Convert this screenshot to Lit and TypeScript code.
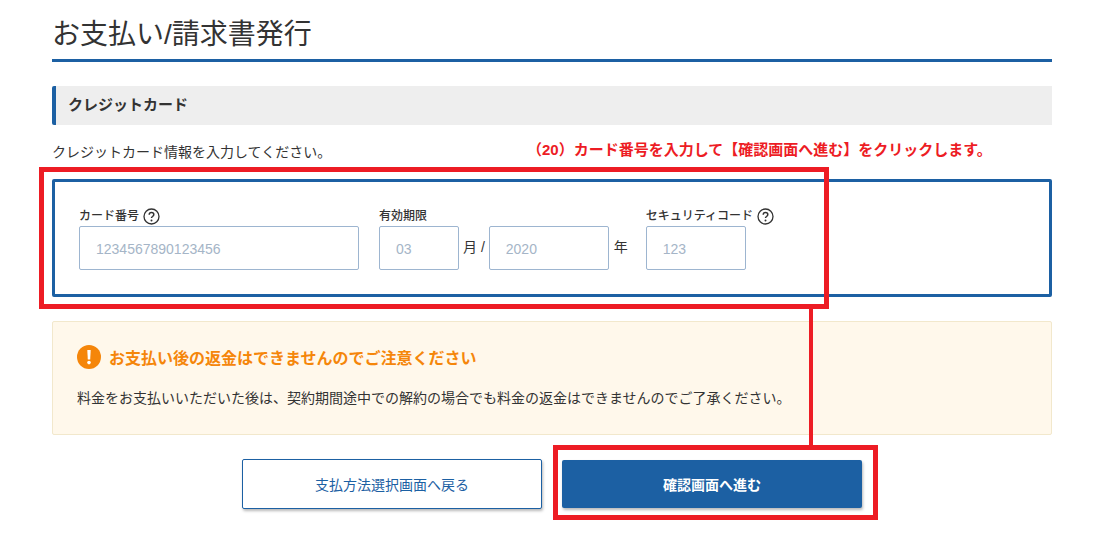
import { LitElement, html, css } from "lit";
import { customElement } from "lit/decorators.js";

const help = html`<svg class="help" width="17" height="17" viewBox="0 0 17 17" aria-hidden="true">
  <circle cx="8.5" cy="8.5" r="7.5" fill="none" stroke="#333" stroke-width="1.3"></circle>
  <path d="M6.2 6.7c0-1.4 1-2.2 2.3-2.2s2.3.8 2.3 2c0 1-.6 1.5-1.3 2-.6.4-1 .8-1 1.6" fill="none" stroke="#333" stroke-width="1.5"></path>
  <circle cx="8.5" cy="12.4" r="1" fill="#333"></circle>
</svg>`;

@customElement("app-root")
export class AppRoot extends LitElement {
  static styles = css`
    :host {
      display: block;
      position: relative;
      width: 1099px;
      height: 548px;
      overflow: hidden;
      background: #fff;
      color: #333;
      font-family: "Liberation Sans", "Noto Sans CJK JP", sans-serif;
      font-size: 14px;
    }
    .page {
      width: 1000px;
      margin-left: 52px;
      display: flex;
      flex-direction: column;
    }
    h1 {
      margin: 0;
      height: 59px;
      box-sizing: content-box;
      border-bottom: 3px solid #1c60a3;
      font-size: 28px;
      font-weight: 400;
      line-height: 70px;
    }
    h2 {
      margin: 24px 0 0;
      height: 39px;
      background: #eee;
      border-left: 4px solid #1c60a3;
      border-radius: 2px 0 0 2px;
      padding-left: 12px;
      font-size: 15px;
      font-weight: 700;
      line-height: 37px;
    }
    .lead {
      margin: 0;
      height: 54px;
      font-size: 14px;
      line-height: 54px;
    }
    .card {
      box-sizing: border-box;
      height: 118px;
      border: 3px solid #1c60a3;
      border-radius: 2px;
      padding: 25px 24px 0;
      display: flex;
      align-items: flex-start;
    }
    .field { display: flex; flex-direction: column; }
    .exp { margin-left: 20px; }
    .sec { margin-left: 18px; }
    label {
      height: 19px;
      margin-bottom: -1px;
      display: flex;
      align-items: center;
      gap: 4px;
      font-size: 12px;
      font-weight: 500;
      line-height: 19px;
    }
    .inputs { display: flex; align-items: center; height: 44px; margin-top: 1px; }
    input {
      box-sizing: border-box;
      height: 44px;
      border: 1px solid #9db5d0;
      border-radius: 2px;
      background: #fff;
      padding: 1px 16px 0;
      font: 14px "Liberation Sans", "Noto Sans CJK JP", sans-serif;
      outline: none;
    }
    input::placeholder { color: #a5b5c7; opacity: 1; }
    .w280 { width: 280px; }
    .w80 { width: 80px; }
    .w100 { width: 100px; }
    .w120 { width: 120px; }
    .unit { font-size: 14px; margin: -4px 4px 0; white-space: pre; }
    .unit.year { margin-left: 5px; margin-right: 0; }
    .notice {
      box-sizing: border-box;
      margin-top: 24px;
      height: 114px;
      background: #fff8eb;
      border: 1px solid #f2e8cc;
      border-radius: 2px;
      padding: 23px 24px 0;
    }
    .notice-title {
      display: flex;
      align-items: center;
      gap: 8px;
      height: 24px;
      color: #f5860a;
      font-size: 16px;
      font-weight: 700;
    }
    .notice-body { margin: 18px 0 0; font-size: 14px; line-height: 22px; white-space: nowrap; }
    .actions {
      margin-top: 24px;
      display: flex;
      justify-content: center;
      align-items: center;
      gap: 20px;
      width: 1000px;
      padding-left: 0;
    }
    .btn {
      box-sizing: border-box;
      width: 300px;
      display: flex;
      align-items: center;
      justify-content: center;
      border-radius: 2px;
      font: 14px "Liberation Sans", "Noto Sans CJK JP", sans-serif;
      box-shadow: 1px 2px 3px rgba(0, 0, 0, 0.28);
      padding: 0;
    }
    .ghost { height: 50px; background: #fff; color: #1c60a3; border: 1px solid #1c60a3; }
    .primary { height: 48px; background: #1c60a3; color: #fff; border: 0; font-weight: 700; }
    .note {
      position: absolute;
      left: 527px;
      top: 139px;
      color: #ed1c24;
      font-size: 15px;
      font-weight: 700;
      line-height: 22px;
      white-space: nowrap;
    }
    .mark { position: absolute; box-sizing: border-box; border: 5px solid #ed1c24; }
    .m1 { left: 39px; top: 167px; width: 790px; height: 142px; }
    .m2 { left: 553px; top: 445px; width: 325px; height: 75px; }
    .link { position: absolute; left: 809px; top: 309px; width: 4px; height: 136px; background: #ed1c24; }
  `;

  render() {
    return html`
      <div class="page">
        <h1>お支払い/請求書発行</h1>
        <h2>クレジットカード</h2>
        <p class="lead">クレジットカード情報を入力してください。</p>
        <div class="card">
          <div class="field">
            <label>カード番号 ${help}</label>
            <div class="inputs"><input class="w280" placeholder="1234567890123456" /></div>
          </div>
          <div class="field exp">
            <label>有効期限</label>
            <div class="inputs">
              <input class="w80" placeholder="03" />
              <span class="unit">月 /</span>
              <input class="w120" placeholder="2020" />
              <span class="unit year">年</span>
            </div>
          </div>
          <div class="field sec">
            <label>セキュリティコード ${help}</label>
            <div class="inputs"><input class="w100" placeholder="123" /></div>
          </div>
        </div>
        <div class="notice">
          <div class="notice-title">
            <svg width="24" height="24" viewBox="0 0 24 24" aria-hidden="true">
              <circle cx="12" cy="12" r="12" fill="#f5860a"></circle>
              <path d="M10.3 5h3.4l-.5 9.5h-2.4z" fill="#fff"></path>
              <circle cx="12" cy="17.6" r="1.8" fill="#fff"></circle>
            </svg>
            <span>お支払い後の返金はできませんのでご注意ください</span>
          </div>
          <p class="notice-body">料金をお支払いいただいた後は、契約期間途中での解約の場合でも料金の返金はできませんのでご了承ください。</p>
        </div>
        <div class="actions">
          <button class="btn ghost">支払方法選択画面へ戻る</button>
          <button class="btn primary">確認画面へ進む</button>
        </div>
      </div>
      <div class="note">（20）カード番号を入力して【確認画面へ進む】をクリックします。</div>
      <div class="mark m1"></div>
      <div class="link"></div>
      <div class="mark m2"></div>
    `;
  }
}
